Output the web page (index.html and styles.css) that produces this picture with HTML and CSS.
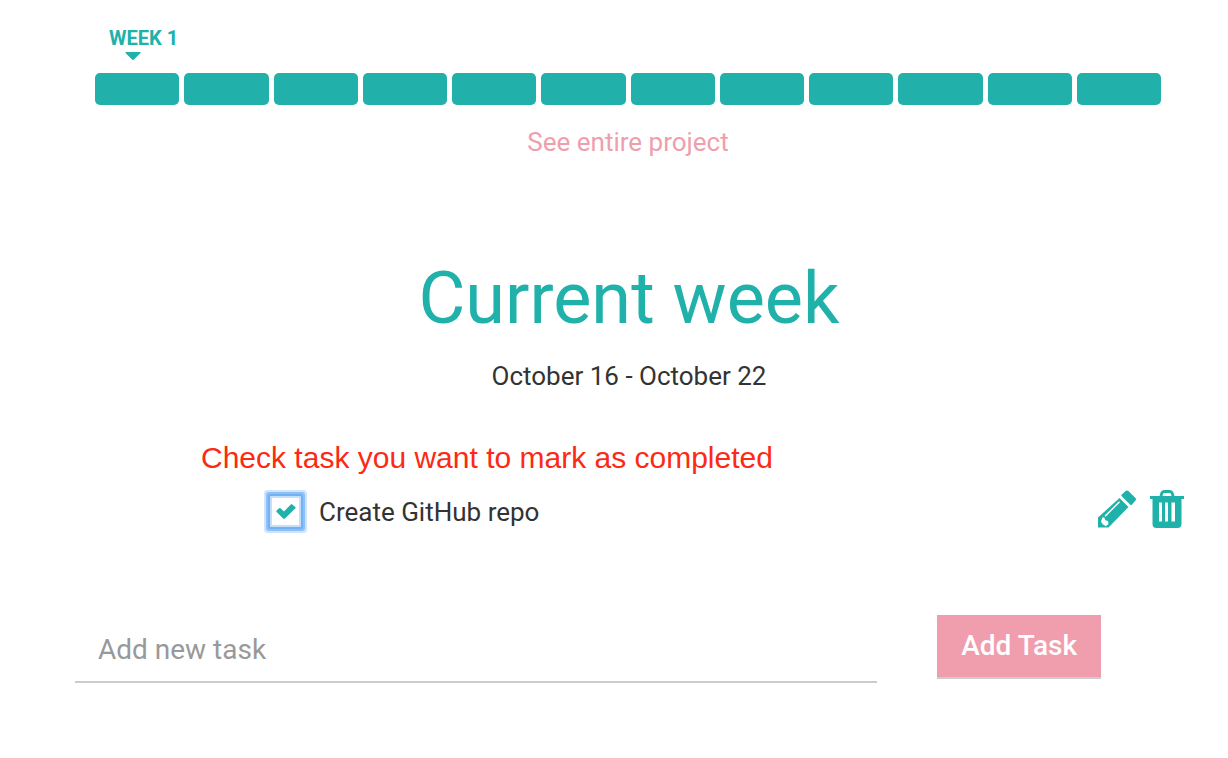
FILE: index.html
```html
<!DOCTYPE html>
<html lang="en">
<head>
<meta charset="utf-8">
<meta name="viewport" content="width=device-width, initial-scale=1">
<title>Current week</title>
<link rel="stylesheet" href="styles.css">
</head>
<body>
<main class="page">
  <section class="timeline">
    <div class="marker">
      <span class="marker-label">WEEK 1</span>
      <svg class="marker-caret" viewBox="0 0 16 8" aria-hidden="true"><path d="M1 0h14q1 0 .5 1L9 7.500q-1 .8-2 0L.5 1Q0 0 1 0z"/></svg>
    </div>
    <div class="weeks">
      <span class="week"></span><span class="week"></span><span class="week"></span><span class="week"></span>
      <span class="week"></span><span class="week"></span><span class="week"></span><span class="week"></span>
      <span class="week"></span><span class="week"></span><span class="week"></span><span class="week"></span>
    </div>
    <a class="project-link" href="#">See entire project</a>
  </section>

  <header class="heading">
    <h1 class="title">Current week</h1>
    <p class="dates">October 16 - October 22</p>
  </header>

  <p class="hint">Check task you want to mark as completed</p>

  <div class="task">
    <label class="task-label" for="task-1">
      <span class="check">
        <input class="check-input" type="checkbox" id="task-1" checked>
        <svg class="check-mark" viewBox="0 0 20 18" aria-hidden="true"><path d="M.6 7.600l2.500-2.400q.7-.6 1.400 0L8 8.400 14.800 1.400q.7-.6 1.400 0L19.300 4q.6.700 0 1.400L8.900 15.500q-.9.700-1.800 0L.6 9q-.6-.7 0-1.400z"/></svg>
      </span>
      <span class="task-name">Create GitHub repo</span>
    </label>
    <div class="actions">
      <button class="icon-button" type="button" aria-label="Edit task">
        <svg class="icon icon-pencil" viewBox="0 0 38 38" aria-hidden="true"><path fill-rule="evenodd" d="M25.500 3l2-2q1.500-1 3 0l7 7q1 1.200 0 2.500L34 14.500Q33 15.500 32 14.500L23.500 6Q23 5.300 23.500 4.700zM21.500 8l9 9L10.500 37.500H0V27.500zM21 11.300L6.500 25.800l1 1 14.500-14.500zM4.500 27.300L3 32l1.200 1 .3 1.500 1.500.3 1.500 1.500 3-2-.5-3.300-2.800-.7-.7-2.500z"/></svg>
      </button>
      <button class="icon-button" type="button" aria-label="Delete task">
        <svg class="icon icon-trash" viewBox="0 0 36 38" aria-hidden="true"><path fill-rule="evenodd" d="M10.500 6l1-3.500Q12.300 0 15 0h6q2.700 0 3.500 2.500l1 3.500H35v3h-2.500v25q0 4-4 4h-21q-4 0-4-4V9H1V6zM13.500 6h9l-.5-2q-.4-1-1.500-1h-5q-1.100 0-1.500 1zM10 12.500v19h3v-19zM16 12.500v19h3v-19zM22.500 12.500v19h3.500v-19z"/></svg>
      </button>
    </div>
  </div>

  <form class="new-task">
    <input class="new-task-input" type="text" placeholder="Add new task" aria-label="Add new task">
    <button class="new-task-button" type="button">Add Task</button>
  </form>
</main>
</body>
</html>
```
FILE: styles.css
```css
* {
  box-sizing: border-box;
}

body {
  margin: 0;
  background: #fff;
  color: #333;
  font-family: Roboto, "Liberation Sans", sans-serif;
  font-size: 26px;
  line-height: 36px;
}

.page {
  padding: 28px 43px 0 75px;
}

.timeline {
  display: flex;
  flex-direction: column;
  padding: 0 24px 0 20px;
}

.marker {
  display: flex;
  flex-direction: column;
  align-self: flex-start;
  align-items: flex-start;
  gap: 4px;
  padding-left: 14px;
  color: #20b2aa;
  font-size: 20px;
  font-weight: 700;
  line-height: 20px;
}

.marker-caret {
  width: 16px;
  height: 8px;
  margin-left: 16px;
  fill: #20b2aa;
}

.weeks {
  display: grid;
  grid-template-columns: repeat(12, 1fr);
  gap: 5px;
  margin-top: 13px;
}

.week {
  height: 32px;
  border-radius: 5px;
  background: #22b0aa;
}

.project-link {
  align-self: center;
  margin-top: 19px;
  color: #f09ead;
  text-decoration: none;
}

.heading {
  padding: 0 22px 0 20px;
  text-align: center;
}

.title {
  margin: 99px 0 0;
  color: #20b2aa;
  font-size: 72px;
  font-weight: 400;
  line-height: 80px;
}

.dates {
  margin: 19px 0 0;
}

.hint {
  margin: 46px 0 0 126px;
  color: #fc2a14;
  font-family: "Liberation Sans", sans-serif;
  font-size: 30px;
}

.task {
  display: flex;
  align-items: flex-start;
  justify-content: space-between;
  margin: 14px 0 0 189px;
}

.task-label {
  display: flex;
  align-items: center;
  gap: 12px;
}

.check {
  display: grid;
  place-items: center;
  width: 43px;
  height: 43px;
}

.check-input,
.check-mark {
  grid-area: 1 / 1;
}

.check-input {
  width: 31px;
  height: 31px;
  margin: 0;
  appearance: none;
  border: 2px solid #c5dffb;
  border-radius: 1px;
  background: #fff;
  box-shadow: 0 0 0 2px #75b0f1, 0 0 0 4px #8dc0f8, 0 0 0 6px #d0e5fc;
}

.check-mark {
  width: 20px;
  height: 18px;
  fill: #20b2aa;
  pointer-events: none;
}

.actions {
  display: flex;
  gap: 13px;
}

.icon-button {
  display: flex;
  padding: 0;
  border: 0;
  background: none;
  cursor: pointer;
}

.icon {
  height: 38px;
  fill: #20b2aa;
}

.icon-pencil {
  width: 38px;
}

.icon-trash {
  width: 36px;
}

.new-task {
  display: flex;
  align-items: flex-start;
  gap: 60px;
  margin: 82px 84px 0 0;
}

.new-task-input {
  flex: 1;
  min-width: 0;
  height: 68px;
  padding: 2px 23px 0;
  border: 0;
  border-bottom: 2px solid #ccc;
  background: none;
  color: #333;
  font: inherit;
  font-size: 28px;
}

.new-task-input::placeholder {
  color: #999;
  opacity: 1;
}

.new-task-button {
  height: 64px;
  padding: 0 24px;
  border: 0;
  border-bottom: 2px solid #ccc;
  background: #f09ead;
  color: #fff;
  font: inherit;
  font-size: 28px;
  font-weight: 500;
  cursor: pointer;
}
```
